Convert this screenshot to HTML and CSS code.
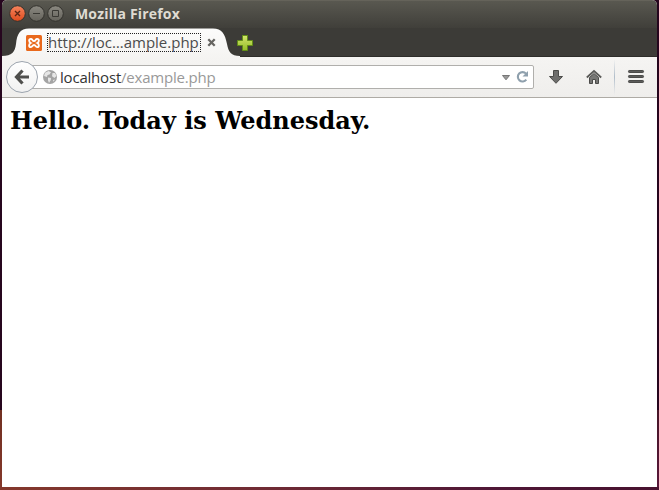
FILE: index.html
```html
<!DOCTYPE html>
<html lang="en">
<head>
<meta charset="utf-8">
<title>Mozilla Firefox</title>
<link rel="stylesheet" href="styles.css">
</head>
<body>
<div class="window">
  <header class="titlebar">
    <svg class="controls" width="60" height="20" viewBox="0 0 60 20">
      <defs>
        <linearGradient id="red" x2="0" y2="1"><stop stop-color="#f5845d"/><stop offset="1" stop-color="#df4b1d"/></linearGradient>
        <linearGradient id="gray" x2="0" y2="1"><stop stop-color="#8b8981"/><stop offset="1" stop-color="#64625b"/></linearGradient>
      </defs>
      <g stroke="#33322d">
        <circle cx="10.5" cy="9.500" r="7.8" fill="url(#red)"/>
        <circle cx="29.5" cy="9.500" r="7.8" fill="url(#gray)"/>
        <circle cx="48.5" cy="9.500" r="7.8" fill="url(#gray)"/>
      </g>
      <path d="M8 7l5 5M13 7l-5 5" stroke="#5c2614" stroke-width="1.4"/>
      <path d="M26 9.500h7M45.500 6.500h6v6h-6z" fill="none" stroke="#3a3934"/>
    </svg>
    <span class="title">Mozilla Firefox</span>
  </header>
  <div class="tabs">
    <div class="tab">
      <svg class="tab-shape" width="228" height="29" viewBox="0 0 228 29">
        <defs><linearGradient id="tab" x2="0" y2="1"><stop stop-color="#fcfcfb"/><stop offset="1" stop-color="#f5f4f2"/></linearGradient></defs>
        <path d="M0 29V28C10 28 13 24 14 16C15 6 18 .5 27 .5H211C220 .5 223 6 225 16C226.500 24 229 28 238 28V29Z" fill="url(#tab)"/>
      </svg>
      <svg class="favicon" width="16" height="16" viewBox="0 0 16 16">
        <rect width="16" height="16" rx="1.500" fill="#e9691c"/>
        <path d="M4.700 8C2.600 7 2.600 3.900 4.900 3.900C6.600 3.900 6.200 6 8 6S9.400 3.900 11.100 3.900C13.400 3.900 13.400 7 11.300 8C13.400 9 13.400 12.100 11.100 12.100C9.400 12.100 9.800 10 8 10S6.600 12.100 4.900 12.100C2.600 12.100 2.600 9 4.700 8Z" fill="none" stroke="#fff" stroke-width="1.900"/>
      </svg>
      <span class="tab-label">http://loc…ample.php</span>
      <svg class="tab-close" width="9" height="9" viewBox="0 0 9 9"><path d="M1.300 1.300l6.400 6.400M7.700 1.300L1.300 7.700" stroke="#666561" stroke-width="2.300"/></svg>
    </div>
    <svg class="new-tab" width="18" height="18" viewBox="0 0 18 18">
      <defs><linearGradient id="green" x2="0" y2="1"><stop stop-color="#d3e56d"/><stop offset="1" stop-color="#94be27"/></linearGradient></defs>
      <path d="M6.500 1.500h5v5h5v5h-5v5h-5v-5h-5v-5h5z" fill="url(#green)" stroke="#628d17"/>
    </svg>
  </div>
  <nav class="toolbar">
    <svg class="back" width="34" height="34" viewBox="0 0 34 34">
      <defs><linearGradient id="btn" x2="0" y2="1"><stop stop-color="#fff"/><stop offset="1" stop-color="#f1f1f1"/></linearGradient></defs>
      <circle cx="17" cy="17" r="15.500" fill="url(#btn)" stroke="#9ba3ad"/>
      <path d="M17.500 10.500L11.500 17l6 6.500M12 17H24" fill="none" stroke="#4f4f4d" stroke-width="3.200"/>
    </svg>
    <div class="address">
      <svg class="globe" width="14" height="14" viewBox="0 0 14 14">
        <circle cx="7" cy="7" r="7" fill="#a4a4a4"/>
        <path d="M2 2.800L5.500 1L8 2.200L6.500 4.500L4.500 5L4 7L1 6ZM5 7.500L8 8L7.800 10L6 13L5 10.500ZM9.500 3L12 3L13.400 6L11.500 8L9 6.300ZM10 10l2 -.500l-1.500 2.200z" fill="#e6e6e6"/>
      </svg>
      <span class="url">localhost<span>/example.php</span></span>
      <svg class="address-icons" width="30" height="16" viewBox="0 0 30 16">
        <path d="M1.500 6.500h7L5 10.800z" fill="#999" stroke="#777"/>
        <path d="M25 4.600A4.700 4.700 0 1 0 25.300 10.600" fill="none" stroke="#8fa0ad" stroke-width="2.100"/>
        <path d="M27 2v5.600h-5.500z" fill="#8fa0ad"/>
      </svg>
    </div>
    <svg class="tools" width="110" height="36" viewBox="0 0 110 36">
      <defs><linearGradient id="sep" x2="0" y2="1"><stop stop-color="#b6c2ce" stop-opacity="0"/><stop offset=".5" stop-color="#b0bdc9"/><stop offset="1" stop-color="#b6c2ce" stop-opacity="0"/></linearGradient></defs>
      <path d="M7.500 11.500h5v6h4L10 24.300L3.500 17.500h4z" fill="#6e6e6c" stroke="#4b4b49"/>
      <path d="M43.500 18.500L48 14.500L52.500 18.500V24.500H49.500V20.500H46.500V24.500H43.500Z" fill="#777775" stroke="#4b4b49"/>
      <path d="M40.800 18.500L48 12L55.200 18.500" fill="none" stroke="#5b5b59" stroke-width="1.800"/>
      <rect x="68" y="0" width="1" height="36" fill="url(#sep)"/>
      <g fill="#5b5b59" stroke="#4b4b49"><rect x="82.500" y="11.500" width="15" height="2" rx=".7"/><rect x="82.500" y="16.500" width="15" height="2" rx=".7"/><rect x="82.500" y="21.500" width="15" height="2" rx=".7"/></g>
    </svg>
  </nav>
  <main><h1>Hello. Today is Wednesday.</h1></main>
</div>
</body>
</html>
```
FILE: styles.css
```css
* { box-sizing: border-box; }
body {
  margin: 0;
  height: 490px;
  padding: 0 2px 3px;
  overflow: hidden;
  background:
    linear-gradient(90deg, #84382c, #702b34 40%, #4f1736 75%, #48122f) 0 487px / 100% 3px no-repeat,
    linear-gradient(#713022, #85382b) 0 410px / 2px 80px no-repeat,
    linear-gradient(#471628, #5a183b) 657px 410px / 2px 80px no-repeat,
    #26061e;
}
svg { display: block; flex: none; }
.window {
  display: flex;
  flex-direction: column;
  height: 487px;
  background: #fff;
  border-radius: 5px 5px 0 0;
  overflow: hidden;
  font-family: "Open Sans", "Noto Sans", sans-serif;
}
.titlebar {
  display: flex;
  align-items: center;
  height: 28px;
  padding: 0 0 1px 5px;
  background: linear-gradient(#595850, #403f3a);
  border-top: 1px solid #65635a;
}
.title {
  margin-left: 8px;
  color: #dfdbd2;
  font-size: 14px;
  font-weight: 700;
  line-height: 20px;
  letter-spacing: 0.17px;
  white-space: nowrap;
}
.tabs {
  display: flex;
  align-items: center;
  height: 29px;
  background: #3c3b37;
  border-bottom: 1px solid #2d2c29;
}
.tab {
  position: relative;
  display: flex;
  align-items: center;
  width: 234px;
  height: 29px;
  padding-left: 24px;
}
.tab-shape { position: absolute; left: 0; top: 0; overflow: visible; }
.favicon, .tab-label, .tab-close { position: relative; }
.favicon { margin-top: 1px; }
.tab-label {
  width: 154px;
  height: 19px;
  margin-left: 5px;
  border: 1px dotted #222;
  color: #4c4c4c;
  font-size: 15px;
  line-height: 17px;
  letter-spacing: 0;
  white-space: nowrap;
}
.tab-close { margin: 1px 0 0 6px; }
.new-tab { margin-top: 1px; }
.toolbar {
  display: flex;
  align-items: center;
  height: 41px;
  padding-left: 3px;
  background: linear-gradient(#f5f4f2, #efeeec);
  border-bottom: 1px solid #aeaba5;
}
.back { position: relative; }
.address {
  display: flex;
  align-items: center;
  width: 512px;
  height: 24px;
  margin-left: -17px;
  padding: 0 2px 0 20px;
  background: #fff;
  border: 1px solid #b0afac;
  border-radius: 2px;
}
.url {
  margin-left: 3px;
  color: #333;
  font-size: 15px;
  line-height: 20px;
  letter-spacing: -0.2px;
  white-space: nowrap;
}
.url span { color: #999; }
.address-icons { margin-left: auto; }
.tools { margin-left: 12px; }
main { flex: 1; padding: 9px 8px; }
h1 {
  margin: 0;
  color: #000;
  font: bold 24px/28px "DejaVu Serif", serif;
  white-space: nowrap;
}
```
